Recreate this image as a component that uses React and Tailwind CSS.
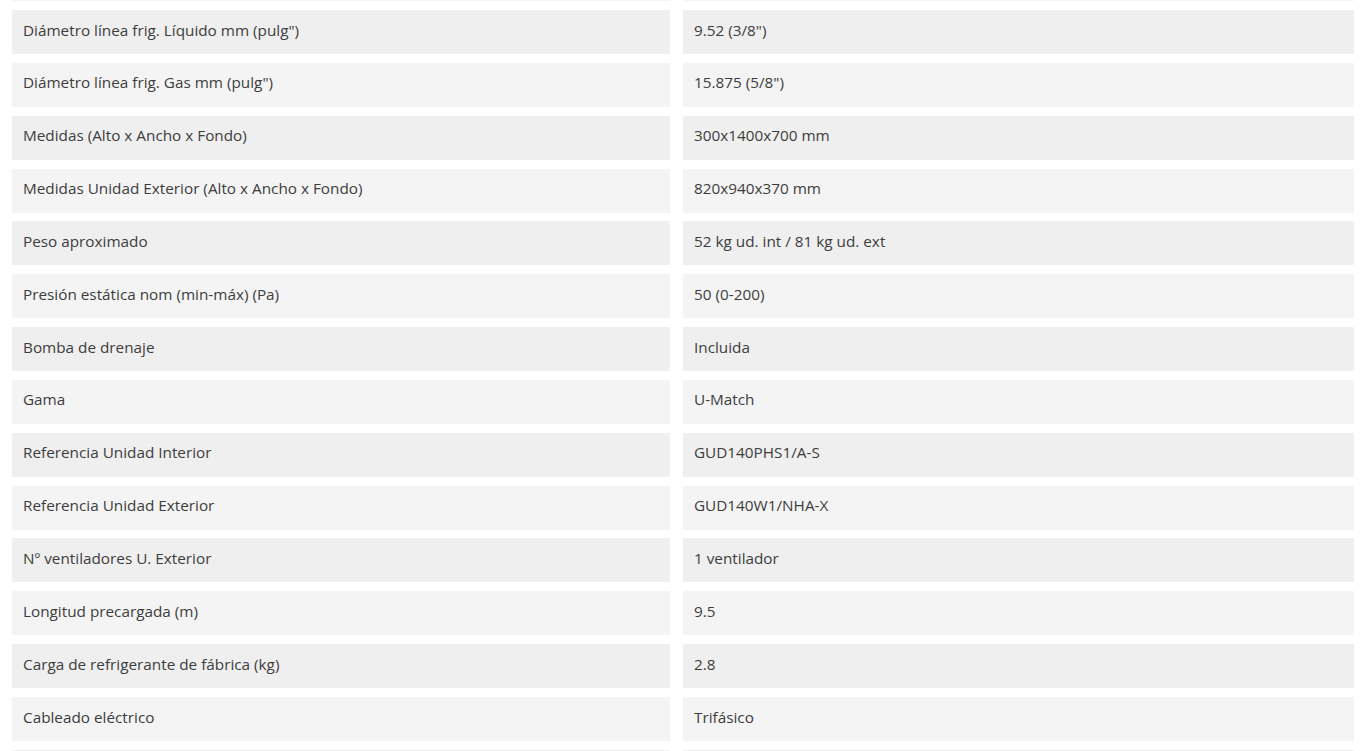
import React from "react";

const rows = [
  ["", ""],
  ["Diámetro línea frig. Líquido mm (pulg\")", "9.52 (3/8\")"],
  ["Diámetro línea frig. Gas mm (pulg\")", "15.875 (5/8\")"],
  ["Medidas (Alto x Ancho x Fondo)", "300x1400x700 mm"],
  ["Medidas Unidad Exterior (Alto x Ancho x Fondo)", "820x940x370 mm"],
  ["Peso aproximado", "52 kg ud. int / 81 kg ud. ext"],
  ["Presión estática nom (min-máx) (Pa)", "50 (0-200)"],
  ["Bomba de drenaje", "Incluida"],
  ["Gama", "U-Match"],
  ["Referencia Unidad Interior", "GUD140PHS1/A-S"],
  ["Referencia Unidad Exterior", "GUD140W1/NHA-X"],
  ["Nº ventiladores U. Exterior", "1 ventilador"],
  ["Longitud precargada (m)", "9.5"],
  ["Carga de refrigerante de fábrica (kg)", "2.8"],
  ["Cableado eléctrico", "Trifásico"],
  ["", ""],
];

function App() {
  return (
    <div className="h-[751px] overflow-hidden bg-white">
      <div
        className="mt-[-42.85px] flex flex-col gap-y-[8.85px] px-[12px] pr-[11px] text-[15.3px] text-[#3d3d3d]"
        style={{ fontFamily: '"Open Sans", sans-serif' }}
      >
        {rows.map(([label, value], i) => {
          const bg = i % 2 === 1 ? "bg-[#efefef]" : "bg-[#f4f4f4]";
          return (
            <div key={i} className="flex h-[44px] gap-x-[13px] shrink-0">
              <div className={`${bg} w-[658px] flex items-center px-[11px] pb-[4px]`}>
                {label}
              </div>
              <div className={`${bg} flex-1 flex items-center px-[11px] pb-[4px]`}>
                {value}
              </div>
            </div>
          );
        })}
      </div>
    </div>
  );
}

export default App;
